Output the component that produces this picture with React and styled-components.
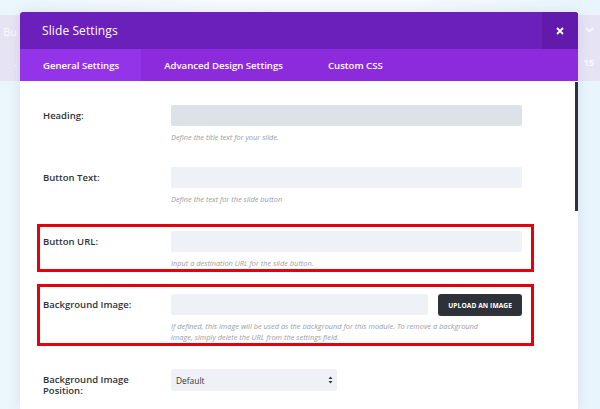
import React from 'react';
import styled, { createGlobalStyle } from 'styled-components';

const Global = createGlobalStyle`
    html, body {
        margin: 0;
        padding: 0;
        width: 600px;
        height: 409px;
        overflow: hidden;
        font-family: "Open Sans", "Liberation Sans", sans-serif;
    }
`

const Backdrop = styled.div`
    width: 600px;
    height: 409px;
    display: flex;
    background: linear-gradient(90deg, #eaf6fc 0%, #f6fbfe 40%, #f4fafd 70%, #e8f5fc 100%);
    overflow: hidden;
`

const SideStrip = styled.div`
    width: ${p => p.$w}px;
    flex-shrink: 0;
    padding-top: 15px;
`

const SideBar = styled.div`
    height: 66px;
    background: #e6e4f4;
    color: #fbfaff;
    font-size: 11px;
    display: flex;
    flex-direction: column;
    align-items: ${p => p.$align};
    justify-content: space-around;
    padding-right: ${p => p.$pr || 0}px;
    overflow: hidden;
    white-space: nowrap;
`

const Modal = styled.div`
    width: 558px;
    flex-shrink: 0;
    margin-top: 12px;
    background: #fff;
    display: flex;
    flex-direction: column;
    box-shadow: 0 0 12px rgba(80, 60, 140, 0.12);
    position: relative;
`

const Header = styled.div`
    height: 37px;
    background: #6c20bb;
    border-radius: 3px 3px 0 0;
    display: flex;
    align-items: center;
    color: #fff;
`

const Title = styled.h1`
    flex: 1;
    margin: 0;
    padding-left: 22px;
    font-size: 12px;
    font-weight: 400;
    letter-spacing: 0.1px;
`

const Close = styled.div`
    width: 36px;
    height: 37px;
    background: #621aac;
    display: flex;
    align-items: center;
    justify-content: center;
    border-top-right-radius: 3px;
`

const Tabs = styled.div`
    height: 32px;
    background: #8b2bdb;
    display: flex;
`

const Tab = styled.div`
    padding: 0 22px 0 23px;
    display: flex;
    align-items: center;
    background: ${p => (p.$active ? '#9334e9' : 'transparent')};
    color: #fff;
    font-size: 9.6px;
    font-weight: 600;
`

const Body = styled.div`
    flex: 1;
    padding: 24px 0 0 17px;
    position: relative;
`

const Scroll = styled.div`
    position: absolute;
    right: 0;
    top: 1px;
    width: 3px;
    height: 129px;
    background: #2d3238;
`

const Highlight = styled.div`
    width: 497px;
    box-sizing: border-box;
    border: 3px solid #e5000c;
    padding: ${p => p.$pt}px 0 ${p => p.$pb}px 3px;
    margin-top: ${p => p.$mt}px;
`

const Row = styled.div`
    display: grid;
    grid-template-columns: 128px 351px;
    padding-left: ${p => (p.$boxed ? 0 : 6)}px;
    margin-bottom: ${p => p.$mb || 0}px;
    margin-top: ${p => p.$mt || 0}px;
`

const Label = styled.div`
    padding-top: 5px;
    font-size: 9.5px;
    font-weight: 600;
    line-height: 11px;
    color: #2f3338;
    max-width: ${p => (p.$wide ? 'none' : '100px')};
`

const Field = styled.div`
    display: flex;
    flex-direction: column;
`

const Inputs = styled.div`
    display: flex;
    gap: 10px;
`

const Input = styled.div`
    height: 21px;
    width: ${p => p.$w || 351}px;
    background: ${p => (p.$focus ? '#dde2e9' : '#eef2f7')};
    border-radius: 2px;
`

const Upload = styled.div`
    width: 84px;
    height: 22px;
    background: #2e3238;
    border-radius: 3px;
    color: #fff;
    font-size: 6.6px;
    font-weight: 700;
    display: flex;
    align-items: center;
    justify-content: center;
    letter-spacing: 0.1px;
`

const Desc = styled.p`
    margin: ${p => p.$mt || 6}px 0 0 0;
    font-size: 7.4px;
    font-style: italic;
    line-height: 11px;
    color: #999da2;
    width: ${p => p.$w || 351}px;
`

const Select = styled.div`
    width: 166px;
    height: 22px;
    background: #eef2f7;
    border-radius: 2px;
    display: flex;
    align-items: center;
    justify-content: space-between;
    padding: 0 4px 0 5px;
    box-sizing: border-box;
    font-size: 8.4px;
    color: #32373c;
`

const Arrows = () => (
    <svg width="5" height="8" viewBox="0 0 5 8">
        <path d="M2.5 0.5 L4.5 3 H0.5 Z M2.5 7.5 L0.5 5 H4.5 Z" fill="#32373c" />
    </svg>
)

const Chevron = () => (
    <svg width="9" height="6" viewBox="0 0 9 6">
        <path d="M1 1 L4.5 4.5 L8 1" stroke="#fbfaff" strokeWidth="1.6" fill="none" />
    </svg>
)

export default function App() {
    return (
        <Backdrop>
            <Global />
            <SideStrip $w={20}>
                <SideBar $align="flex-end" $pr={3}>
                    <span>Bu</span>
                    <span>·</span>
                </SideBar>
            </SideStrip>
            <Modal>
                <Header>
                    <Title>Slide Settings</Title>
                    <Close>
                        <svg width="8" height="8" viewBox="0 0 8 8">
                            <path d="M1 1 L7 7 M7 1 L1 7" stroke="#fff" strokeWidth="1.8" />
                        </svg>
                    </Close>
                </Header>
                <Tabs>
                    <Tab $active>General Settings</Tab>
                    <Tab>Advanced Design Settings</Tab>
                    <Tab>Custom CSS</Tab>
                </Tabs>
                <Body>
                    <Scroll />
                    <Row $mb={24}>
                        <Label>Heading:</Label>
                        <Field>
                            <Input $focus />
                            <Desc>Define the title text for your slide.</Desc>
                        </Field>
                    </Row>
                    <Row>
                        <Label>Button Text:</Label>
                        <Field>
                            <Input />
                            <Desc>Define the text for the slide button</Desc>
                        </Field>
                    </Row>
                    <Highlight $pt={4} $pb={0} $mt={19}>
                        <Row $boxed>
                            <Label>Button URL:</Label>
                            <Field>
                                <Input />
                                <Desc>Input a destination URL for the slide button.</Desc>
                            </Field>
                        </Row>
                    </Highlight>
                    <Highlight $pt={7} $pb={0} $mt={12}>
                        <Row $boxed>
                            <Label $wide>Background Image:</Label>
                            <Field>
                                <Inputs>
                                    <Input $w={258} />
                                    <Upload>UPLOAD AN IMAGE</Upload>
                                </Inputs>
                                <Desc $w={320} $mt={5}>If defined, this image will be used as the background for this module. To remove a background image, simply delete the URL from the settings field.</Desc>
                            </Field>
                        </Row>
                    </Highlight>
                    <Row $mt={23}>
                        <Label>Background Image Position:</Label>
                        <Field>
                            <Select>
                                <span>Default</span>
                                <Arrows />
                            </Select>
                        </Field>
                    </Row>
                </Body>
            </Modal>
            <SideStrip $w={22}>
                <SideBar $align="center">
                    <Chevron />
                    <span style={{ fontSize: 9, fontWeight: 700 }}>15</span>
                </SideBar>
            </SideStrip>
        </Backdrop>
    );
}
